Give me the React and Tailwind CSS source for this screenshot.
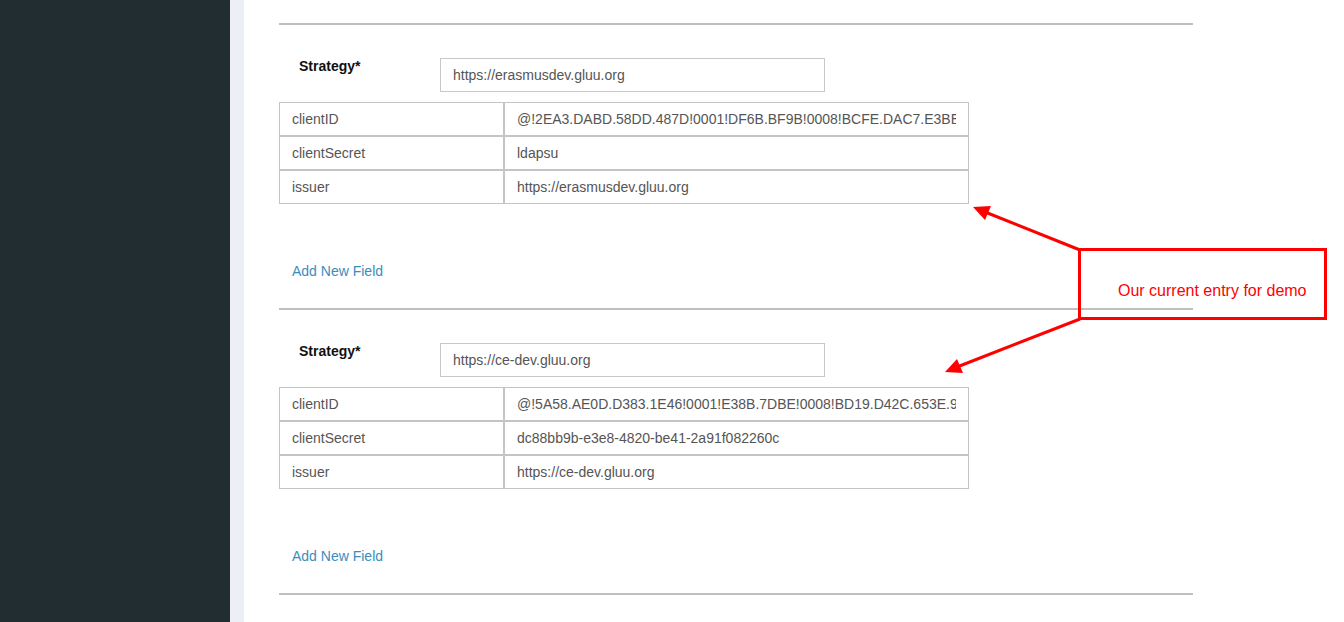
import React from 'react';

const sections = [
  {
    strategy: 'https://erasmusdev.gluu.org',
    fields: [
      ['clientID', '@!2EA3.DABD.58DD.487D!0001!DF6B.BF9B!0008!BCFE.DAC7.E3BE.4A5F'],
      ['clientSecret', 'ldapsu'],
      ['issuer', 'https://erasmusdev.gluu.org'],
    ],
  },
  {
    strategy: 'https://ce-dev.gluu.org',
    fields: [
      ['clientID', '@!5A58.AE0D.D383.1E46!0001!E38B.7DBE!0008!BD19.D42C.653E.9A1B'],
      ['clientSecret', 'dc88bb9b-e3e8-4820-be41-2a91f082260c'],
      ['issuer', 'https://ce-dev.gluu.org'],
    ],
  },
];

const StrategySection = ({ strategy, fields }) => {
  return (
    <div className="flex flex-col">
      <div className="h-[2px] w-[914px] bg-[#bfbfbf]" />

      {/* strategy row */}
      <div className="mt-[31px] flex items-start">
        <label className="w-[161px] pl-[20px] text-[14px] leading-[20px] font-bold text-[#111]">
          Strategy*
        </label>
        <input
          readOnly
          value={strategy}
          className="mt-[2px] h-[34px] w-[385px] border border-[#c8c8c8] bg-white px-[12px] text-[14px] text-[#555] outline-none"
        />
      </div>

      {/* fields table */}
      <table className="mt-[10px] w-[690px] table-fixed border-separate border-spacing-0 text-[14px] text-[#555]">
        <tbody>
          {fields.map(([key, value]) => (
            <tr key={key} className="h-[34px]">
              <td className="w-[225px] border border-[#c4c4c4] px-[12px] py-0">{key}</td>
              <td className="border border-[#c4c4c4] px-[12px] py-0">
                <input
                  readOnly
                  value={value}
                  className="block w-full bg-transparent p-0 text-[14px] text-[#555] outline-none"
                />
              </td>
            </tr>
          ))}
        </tbody>
      </table>

      <a href="#" className="mt-[57px] ml-[13px] w-fit text-[14px] leading-[20px] text-[#3c8dbc]">
        Add New Field
      </a>
      <div className="h-[27px]" />
    </div>
  );
};

const App = () => {
  return (
    <div
      className="relative flex h-[622px] w-[1344px] overflow-hidden bg-white"
      style={{ fontFamily: '"Liberation Sans", Arial, sans-serif' }}
    >
      {/* sidebar */}
      <div className="w-[230px] shrink-0 bg-[#222d32]" />
      <div className="w-[14px] shrink-0 bg-[#ecf0f5]" />

      {/* main content */}
      <div className="flex-1 pl-[35px] pt-[23px]">
        {sections.map((s, i) => (
          <StrategySection key={i} {...s} />
        ))}
        <div className="h-[2px] w-[914px] bg-[#bfbfbf]" />
      </div>

      {/* annotation overlay */}
      <svg
        className="pointer-events-none absolute left-0 top-0"
        width="1344"
        height="622"
        viewBox="0 0 1344 622"
      >
        <line x1="1080" y1="250" x2="985" y2="212" stroke="#ff0000" strokeWidth="3" />
        <polygon points="973,207 991,206 985,220" fill="#ff0000" />
        <line x1="1080" y1="319" x2="957" y2="367" stroke="#ff0000" strokeWidth="3" />
        <polygon points="945,372 957,359 963,373" fill="#ff0000" />
      </svg>
      <div className="pointer-events-none absolute left-[1078px] top-[248px] h-[72px] w-[249px] border-[3px] border-[#ff0000] pl-[37px] pt-[31px] text-[16px] leading-[18px] text-[#ff0000]">
        Our current entry for demo
      </div>
    </div>
  );
};

export default App;
